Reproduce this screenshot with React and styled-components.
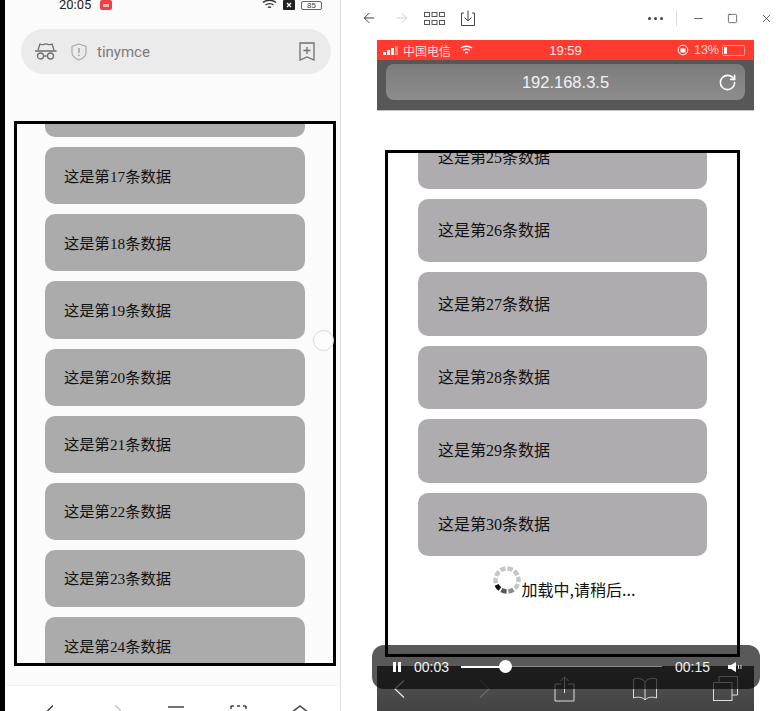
import React from 'react';
import styled, { createGlobalStyle } from 'styled-components';
import { ArrowLeft, ArrowRight, Minus, Square, X, RotateCw } from 'lucide-react';

const GlobalStyle = createGlobalStyle`
  html, body { margin: 0; padding: 0; background: #fff; }
  body { font-family: "Liberation Serif", "Noto Sans CJK SC", serif; }
  * { box-sizing: border-box; }
`;

const Page = styled.div`
  width: 781px;
  height: 711px;
  display: flex;
  overflow: hidden;
  position: relative;
  background: #fff;
`;

const BlackEdge = styled.div`
  width: 5px;
  background: #000;
`;

const LeftPanel = styled.div`
  width: 335px;
  background: #fbfbfb;
  display: flex;
  flex-direction: column;
`;

const StatusBar = styled.div`
  height: 10px;
  display: flex;
  align-items: center;
  padding: 0 18px 0 54px;
  color: #222;
  font: 13px/10px "Roboto", sans-serif;
`;

const RecDot = styled.span`
  width: 12px;
  height: 10px;
  margin-left: 9px;
  border-radius: 2px;
  background: #ee4040;
  display: flex;
  align-items: center;
  justify-content: center;
  &::after {
    content: "";
    width: 6px;
    height: 3px;
    background: #f7b5b5;
  }
`;

const StatusRight = styled.div`
  margin-left: auto;
  display: flex;
  align-items: center;
  gap: 6px;
`;

const BatteryBox = styled.span`
  width: 21px;
  height: 9px;
  border: 1px solid #666;
  border-radius: 2px;
  font: 8px/7px "Liberation Sans", sans-serif;
  text-align: center;
  color: #444;
`;

const AddressPill = styled.div`
  margin: 19px 9px 0 16px;
  height: 45px;
  border-radius: 23px;
  background: #ebebeb;
  display: flex;
  align-items: center;
  padding: 0 16px 0 14px;
  color: #7b7b7b;
  font: 15px "Roboto", sans-serif;
`;

const PillText = styled.span`
  margin-left: 10px;
`;

const ShieldIcon = styled.svg`
  margin-left: 14px;
`;

const BookmarkIcon = styled.svg`
  margin-left: auto;
`;

const Frame = styled.div`
  border: 3px solid #000;
  overflow: hidden;
  background: ${p => p.$bg};
`;

const LeftFrame = styled(Frame)`
  width: 322px;
  height: 545px;
  margin: 47px 0 0 9px;
`;

const ItemList = styled.div`
  display: flex;
  flex-direction: column;
  gap: 10px;
  width: ${p => p.$w}px;
  margin: ${p => p.$top}px 0 0 ${p => p.$left}px;
`;

const Item = styled.div`
  flex: none;
  height: ${p => p.$h}px;
  border-radius: 10px;
  background: ${p => p.$bg};
  display: flex;
  align-items: center;
  padding: 0 0 ${p => p.$lift}px ${p => p.$pad}px;
  color: #111;
  font-size: ${p => p.$size}px;
`;

const BrowserBar = styled.div`
  margin-top: 19px;
  flex: 1;
  background: #fff;
  border-top: 1px solid #f0f0f0;
  overflow: hidden;
  display: flex;
  align-items: flex-start;
  padding: 19px 0 0 40px;
`;

const BarIcon = styled.svg`
  flex: none;
  margin-left: ${p => p.$ml || 0}px;
`;

const Knob = styled.div`
  position: absolute;
  left: 313px;
  top: 330px;
  width: 21px;
  height: 21px;
  border-radius: 50%;
  border: 1px solid #d8d8d8;
  background: rgba(255, 255, 255, 0.5);
`;

const RightPanel = styled.div`
  width: 441px;
  position: relative;
  border-left: 1px solid #dedede;
  display: flex;
  flex-direction: column;
  background: #fff;
`;

const WinBar = styled.div`
  height: 40px;
  flex: none;
  display: flex;
  align-items: center;
  padding: 0 8px 4px 20px;
  color: #444;
`;

const WinIcon = styled.span`
  display: flex;
  margin-left: ${p => p.$ml || 0}px;
  color: ${p => p.$color || '#333'};
`;

const Dots = styled.span`
  margin-left: auto;
  display: flex;
  gap: 3px;
  & > i {
    width: 3px;
    height: 3px;
    border-radius: 50%;
    background: #444;
  }
`;

const WinDivider = styled.span`
  width: 1px;
  height: 16px;
  margin: 0 15px 0 13px;
  background: #dcdcdc;
`;

const PhoneScreen = styled.div`
  margin-left: 36px;
  width: 377px;
  flex: 1;
  display: flex;
  flex-direction: column;
  min-height: 0;
`;

const RedBar = styled.div`
  height: 20px;
  flex: none;
  background: #ff3b30;
  color: #fbdcd9;
  display: flex;
  align-items: center;
  position: relative;
  padding: 0 9px 0 6px;
  font: 12px "Noto Sans CJK SC", sans-serif;
`;

const SignalBars = styled.span`
  display: flex;
  align-items: flex-end;
  gap: 1px;
  height: 9px;
  margin-right: 5px;
  & > i {
    width: 3px;
    background: #fff;
  }
  & > i:nth-child(1) { height: 3px; }
  & > i:nth-child(2) { height: 5px; }
  & > i:nth-child(3) { height: 7px; }
  & > i:nth-child(4) { height: 9px; background: #ff8a82; }
`;

const WifiIcon = styled.svg`
  margin-left: 9px;
`;

const Clock = styled.span`
  position: absolute;
  left: 0;
  right: 0;
  text-align: center;
  color: #fbecea;
  font: 13px "Liberation Sans", sans-serif;
`;

const RedRight = styled.div`
  margin-left: auto;
  display: flex;
  align-items: center;
  gap: 3px;
  font: 12.5px "Liberation Sans", sans-serif;
`;

const LockIcon = styled.svg`
  margin-right: 1px;
`;

const PhoneBattery = styled.span`
  width: 23px;
  height: 11px;
  border: 1px solid #ff9a94;
  border-radius: 2px;
  padding: 1px;
  display: flex;
  & > i {
    width: 3px;
    background: #fff;
  }
`;

const UrlBar = styled.div`
  height: 51px;
  flex: none;
  background: #575757;
  border-bottom: 1px solid #c4c4c4;
  padding: 4px 9px 10px 9px;
`;

const UrlPill = styled.div`
  height: 36px;
  border-radius: 8px;
  background: linear-gradient(#7c7b7c, #8e8d8e);
  color: #f3f3f3;
  display: flex;
  align-items: center;
  position: relative;
  justify-content: center;
  font: 16.5px "Liberation Sans", sans-serif;
`;

const ReloadIcon = styled(RotateCw)`
  position: absolute;
  right: 8px;
  top: 9px;
`;

const ScreenBody = styled.div`
  flex: 1;
  padding: 39px 0 0 8px;
`;

const RightFrame = styled(Frame)`
  width: 355px;
  height: 507px;
`;

const LoaderRow = styled.div`
  display: flex;
  align-items: flex-end;
  justify-content: center;
  gap: 1px;
  margin: 10px 0 0 3px;
  color: #111;
  font: 16px "Noto Sans CJK SC", sans-serif;
`;

const LoaderText = styled.span`
  line-height: 20px;
  margin-bottom: -5px;
`;

const Toolbar = styled.div`
  height: 45px;
  flex: none;
  background: linear-gradient(#555, #434343);
  display: flex;
  align-items: center;
  padding-left: 17px;
`;

const VideoControls = styled.div`
  position: absolute;
  left: 31px;
  bottom: 22px;
  width: 388px;
  height: 44px;
  border-radius: 12px;
  background: rgba(0, 0, 0, 0.65);
  color: #f2f2f2;
  display: flex;
  align-items: center;
  padding: 0 18px 1px 21px;
  font: 14px "Liberation Sans", sans-serif;
`;

const PauseIcon = styled.span`
  width: 8px;
  height: 10px;
  margin-right: 13px;
  border-left: 3px solid #fff;
  border-right: 3px solid #fff;
`;

const Track = styled.div`
  width: 201px;
  height: 1px;
  margin: 0 13px 0 12px;
  background: #8a8a8a;
  position: relative;
`;

const TrackFill = styled.div`
  height: 2px;
  width: 44px;
  background: #fff;
`;

const TrackKnob = styled.span`
  position: absolute;
  left: 38px;
  top: -6px;
  width: 13px;
  height: 13px;
  border-radius: 50%;
  background: #fff;
`;

const VolumeIcon = styled.svg`
  margin-left: auto;
`;

const spinnerColors = ['#c6c6c6', '#8d8d8d', '#555', '#111', '#c6c6c6', '#c6c6c6', '#c6c6c6', '#c6c6c6', '#c6c6c6', '#c6c6c6'];

const Spinner = () => (
  <svg width="28" height="28" viewBox="0 0 28 28">
    {spinnerColors.map((c, i) => {
      const a = (i * 36 + 20) * Math.PI / 180;
      const a2 = a + 27 * Math.PI / 180;
      const r = 11.5;
      return (
        <path
          key={i}
          d={`M${14 + r * Math.cos(a)} ${14 + r * Math.sin(a)}A${r} ${r} 0 0 1 ${14 + r * Math.cos(a2)} ${14 + r * Math.sin(a2)}`}
          fill="none"
          stroke={c}
          strokeWidth="4.5"
        />
      );
    })}
  </svg>
);

const leftRows = [16, 17, 18, 19, 20, 21, 22, 23, 24];
const rightRows = [25, 26, 27, 28, 29, 30];

const App = () => (
  <>
    <GlobalStyle />
    <Page>
      <BlackEdge />
      <LeftPanel>
        <StatusBar>
          20:05
          <RecDot />
          <StatusRight>
            <svg width="15" height="10" viewBox="0 0 15 10" fill="none" stroke="#333" strokeWidth="1.4">
              <path d="M1 2.5c3.5-3 9.5-3 13 0M3.5 5c2.2-1.8 5.8-1.8 8 0M6 7.5c.8-.6 2.2-.6 3 0" />
            </svg>
            <svg width="12" height="10" viewBox="0 0 12 10">
              <rect width="12" height="10" rx="1" fill="#222" />
              <path d="M4 3l4 4M8 3L4 7" stroke="#fff" strokeWidth="1.3" />
            </svg>
            <BatteryBox>85</BatteryBox>
          </StatusRight>
        </StatusBar>
        <AddressPill>
          <svg width="22" height="19" viewBox="0 0 22 19" fill="none" stroke="#6f6f6f" strokeWidth="1.3">
            <path d="M3 8l2-6c2 1.2 3 .8 4 .4 1.400-.6 2.600-.6 4 0 1 .4 2.300.6 4-.4l2 6M0 9h21.500" />
            <circle cx="5.500" cy="14" r="3" />
            <circle cx="15.500" cy="14" r="3" />
            <path d="M8.500 14h4" />
          </svg>
          <ShieldIcon width="16" height="18" viewBox="0 0 16 18" fill="none" stroke="#ababab" strokeWidth="1.2">
            <path d="M8 1l7 2.500v6c0 3.500-3 6-7 7.500-4-1.500-7-4-7-7.500v-6z" />
            <path d="M8 5v5M8 11.500v1.500" stroke="#8f8f8f" />
          </ShieldIcon>
          <PillText>tinymce</PillText>
          <BookmarkIcon width="16" height="19" viewBox="0 0 16 19" fill="none" stroke="#6f6f6f" strokeWidth="1.3">
            <path d="M1 1h14v17l-7-3-7 3zM8 5v7M4.500 8.500h7" />
          </BookmarkIcon>
        </AddressPill>
        <LeftFrame $bg="#fbfbfb">
          <ItemList $w={260} $top={-44} $left={28}>
            {leftRows.map(n => (
              <Item key={n} $h={57.14} $bg="#ababab" $pad={19} $size={15.3} $lift={2}>这是第{n}条数据</Item>
            ))}
          </ItemList>
        </LeftFrame>
        <BrowserBar>
          <BarIcon width="8" height="10" viewBox="0 0 8 10" fill="none" stroke="#444" strokeWidth="1.500"><path d="M8 .5L.5 8" /></BarIcon>
          <BarIcon $ml={62} width="6" height="10" viewBox="0 0 6 10" fill="none" stroke="#bbb" strokeWidth="1.200"><path d="M.5 .5L6 6" /></BarIcon>
          <BarIcon $ml={47} width="16" height="10" viewBox="0 0 16 10" fill="none" stroke="#444" strokeWidth="1.500"><path d="M0 2h16" /></BarIcon>
          <BarIcon $ml={46} width="17" height="10" viewBox="0 0 17 10" fill="none" stroke="#444" strokeWidth="1.500" strokeDasharray="3 3"><path d="M1 1h15M1 1v9M16 1v9" /></BarIcon>
          <BarIcon $ml={43} width="20" height="10" viewBox="0 0 20 10" fill="none" stroke="#444" strokeWidth="1.500"><path d="M1 8l9-7 9 7" /></BarIcon>
        </BrowserBar>
      </LeftPanel>
      <RightPanel>
        <WinBar>
          <WinIcon><ArrowLeft size={16} strokeWidth={1.4} /></WinIcon>
          <WinIcon $ml={17} $color="#c8c8c8"><ArrowRight size={16} strokeWidth={1.2} /></WinIcon>
          <WinIcon $ml={14}>
            <svg width="21" height="13" viewBox="0 0 21 13" fill="none" stroke="#555" strokeWidth="1">
              <rect x=".5" y=".5" width="5" height="4" /><rect x="8" y=".5" width="5" height="4" /><rect x="15.500" y=".5" width="5" height="4" />
              <rect x=".5" y="8.500" width="5" height="4" /><rect x="8" y="8.500" width="5" height="4" /><rect x="15.500" y="8.500" width="5" height="4" />
            </svg>
          </WinIcon>
          <WinIcon $ml={16}>
            <svg width="14" height="16" viewBox="0 0 14 16" fill="none" stroke="#444" strokeWidth="1">
              <path d="M3 3H.5v12.500h13V3H11M7 .5v10M3.500 7.500L7 11l3.500-3.500" />
            </svg>
          </WinIcon>
          <Dots><i /><i /><i /></Dots>
          <WinDivider />
          <WinIcon><Minus size={13} strokeWidth={1.4} /></WinIcon>
          <WinIcon $ml={22}><Square size={11} strokeWidth={1.500} /></WinIcon>
          <WinIcon $ml={22}><X size={13} strokeWidth={1.4} /></WinIcon>
        </WinBar>
        <PhoneScreen>
          <RedBar>
            <SignalBars><i /><i /><i /><i /></SignalBars>
            中国电信
            <WifiIcon width="13" height="10" viewBox="0 0 13 10" fill="none" stroke="#fff" strokeWidth="1.500">
              <path d="M1 3c3-2.500 8-2.500 11 0M3 5.500c2-1.500 5-1.500 7 0M5.200 8c.7-.5 1.900-.5 2.600 0" />
            </WifiIcon>
            <Clock>19:59</Clock>
            <RedRight>
              <LockIcon width="13" height="12" viewBox="0 0 13 12" fill="none" stroke="#fff" strokeWidth="1">
                <circle cx="6" cy="6" r="4.800" /><rect x="4" y="5" width="4" height="3" fill="#fff" />
              </LockIcon>
              13%
              <PhoneBattery><i /></PhoneBattery>
            </RedRight>
          </RedBar>
          <UrlBar>
            <UrlPill>
              192.168.3.5
              <ReloadIcon size={19} strokeWidth={2} color="#fff" />
            </UrlPill>
          </UrlBar>
          <ScreenBody>
            <RightFrame $bg="#fff">
              <ItemList $w={289} $top={-27.4} $left={30}>
                {rightRows.map(n => (
                  <Item key={n} $h={63.4} $bg="#aeacaf" $pad={20} $size={16} $lift={3}>这是第{n}条数据</Item>
                ))}
              </ItemList>
              <LoaderRow>
                <Spinner />
                <LoaderText>加载中,请稍后...</LoaderText>
              </LoaderRow>
            </RightFrame>
          </ScreenBody>
          <Toolbar>
            <BarIcon width="11" height="18" viewBox="0 0 11 18" fill="none" stroke="#e8e8e8" strokeWidth="1.200"><path d="M10 .5L1 9l9 8.500" /></BarIcon>
            <BarIcon $ml={74} width="11" height="18" viewBox="0 0 11 18" fill="none" stroke="#6d6d6d" strokeWidth="1.200"><path d="M1 .5L10 9l-9 8.500" /></BarIcon>
            <BarIcon $ml={64} width="21" height="26" viewBox="0 0 21 26" fill="none" stroke="#ddd" strokeWidth="1">
              <path d="M7 8H1v17h19V8h-6M10.500 17V1M6.500 5l4-4 4 4" />
            </BarIcon>
            <BarIcon $ml={57} width="26" height="24" viewBox="0 0 26 24" fill="none" stroke="#ddd" strokeWidth="1">
              <path d="M13 5C11 1.500 5 .5 1.500 2v19c4-1.500 9-1 11.500 2 2.500-3 7.500-3.500 11.500-2V2C21 .5 15 1.500 13 5zM13 5v18" />
            </BarIcon>
            <BarIcon $ml={55} width="25" height="25" viewBox="0 0 25 25" fill="none" stroke="#ddd" strokeWidth="1">
              <path d="M6 6V.5h18.500V19H19" /><rect x=".5" y="6.500" width="18.500" height="18" />
            </BarIcon>
          </Toolbar>
        </PhoneScreen>
        <VideoControls>
          <PauseIcon />
          00:03
          <Track>
            <TrackFill />
            <TrackKnob />
          </Track>
          00:15
          <VolumeIcon width="14" height="10" viewBox="0 0 14 10">
            <path d="M0 3h3l5-3v10L3 7H0z" fill="#fff" />
            <path d="M10.500 3v4M13 3v4" stroke="#ddd" strokeWidth="1" />
          </VolumeIcon>
        </VideoControls>
      </RightPanel>
      <Knob />
    </Page>
  </>
);

export default App;
